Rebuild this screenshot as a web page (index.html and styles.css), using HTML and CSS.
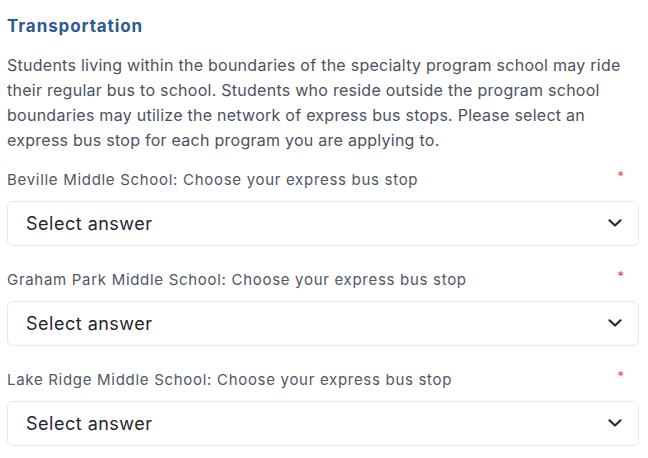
FILE: index.html
```html
<!DOCTYPE html>
<html>
<head>
<meta charset="utf-8">
<link rel="stylesheet" href="styles.css">
</head>
<body>
<section class="section">
  <h2 class="title">Transportation</h2>
  <p class="intro">Students living within the boundaries of the specialty program school may ride their regular bus to school. Students who reside outside the program school boundaries may utilize the network of express bus stops. Please select an express bus stop for each program you are applying to.</p>

  <div class="field">
    <div class="label-row"><span class="label">Beville Middle School: Choose your express bus stop</span><span class="req">*</span></div>
    <div class="select"><span class="placeholder">Select answer</span>
      <svg class="chev" width="14" height="8" viewBox="0 0 14 8"><path d="M1.5 1.3 L7 6.5 L12.5 1.3" fill="none" stroke="#1f2937" stroke-width="2.2" stroke-linecap="round" stroke-linejoin="round"/></svg>
    </div>
  </div>

  <div class="field">
    <div class="label-row"><span class="label">Graham Park Middle School: Choose your express bus stop</span><span class="req">*</span></div>
    <div class="select"><span class="placeholder">Select answer</span>
      <svg class="chev" width="14" height="8" viewBox="0 0 14 8"><path d="M1.5 1.3 L7 6.5 L12.5 1.3" fill="none" stroke="#1f2937" stroke-width="2.2" stroke-linecap="round" stroke-linejoin="round"/></svg>
    </div>
  </div>

  <div class="field">
    <div class="label-row"><span class="label">Lake Ridge Middle School: Choose your express bus stop</span><span class="req">*</span></div>
    <div class="select"><span class="placeholder">Select answer</span>
      <svg class="chev" width="14" height="8" viewBox="0 0 14 8"><path d="M1.5 1.3 L7 6.5 L12.5 1.3" fill="none" stroke="#1f2937" stroke-width="2.2" stroke-linecap="round" stroke-linejoin="round"/></svg>
    </div>
  </div>
</section>
</body>
</html>
```
FILE: styles.css
```css
html, body {
  margin: 0;
  padding: 0;
  background: #ffffff;
}
body {
  font-family: Inter, "Noto Sans", sans-serif;
}
.section {
  width: 632px;
  padding: 14px 0 0 7px;
}
.title {
  margin: 0;
  font-size: 17px;
  font-weight: 700;
  line-height: 24px;
  letter-spacing: 0.9px;
  color: #2c5b92;
}
.intro {
  margin: 15px 0 0 0;
  font-size: 16px;
  line-height: 25px;
  letter-spacing: 0.26px;
  color: #4b5261;
}
.field {
  margin-top: 15.5px;
}
.field + .field {
  margin-top: 23px;
}
.label-row {
  display: flex;
  justify-content: space-between;
  align-items: flex-start;
  height: 22px;
  padding-right: 15px;
}
.label {
  font-size: 15px;
  line-height: 22px;
  letter-spacing: 0.7px;
  color: #505766;
}
.req {
  color: #ef4444;
  font-size: 13px;
  line-height: 14px;
}
.select {
  margin-top: 10px;
  height: 43px;
  border: 1px solid #e3e6ec;
  border-radius: 6px;
  display: flex;
  align-items: center;
  justify-content: space-between;
  padding: 0 16px 0 18px;
}
.placeholder {
  font-size: 18px;
  letter-spacing: 0.5px;
  color: #222630;
}
.chev {
  display: block;
}
```
